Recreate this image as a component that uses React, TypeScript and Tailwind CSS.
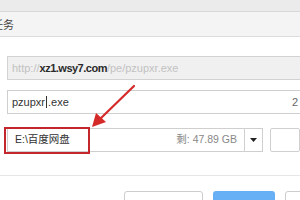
import React from "react";

export default function App() {
  return (
    <div
      className="relative w-[300px] h-[200px] overflow-hidden bg-white"
      style={{ fontFamily: '"Liberation Sans", "Noto Sans CJK SC", sans-serif' }}
    >
      <div className="h-[12px] bg-[#ebebeb] border-b border-[#d9d9d9]" />
      <div className="h-[25px] bg-[#f4f4f4] border-b border-[#dcdcdc] flex items-center">
        <span className="ml-[-8px] mt-[2px] text-[11px] text-[#444]">任务</span>
      </div>

      <div className="mt-[19px] ml-[7px] w-[310px] h-[24px] bg-[#f0f0f0] border border-[#d2d2d2] flex items-center pl-[4px] text-[11px] text-[#c2c2c2] whitespace-nowrap">
        <span>http://</span>
        <span className="text-[#2a2a2a] font-bold tracking-[-0.5px]">xz1.wsy7.com</span>
        <span>/pe/pzupxr.exe</span>
      </div>

      <div className="mt-[10px] ml-[7px] w-[296px] h-[24px] bg-white border border-[#cfcfcf] flex items-center justify-between pl-[4px] pr-[4px] text-[11px] text-[#333] whitespace-nowrap">
        <span className="flex items-center">
          pzupxr
          <span className="inline-block w-[1px] h-[12px] bg-[#333] mx-[1px]" />
          .exe
        </span>
        <span className="text-[#666]">2</span>
      </div>

      <div className="mt-[14px] ml-[7px] flex items-center h-[24px]">
        <div className="w-[272px] h-[24px] border border-[#cfcfcf] flex">
          <div className="flex-1 flex items-center justify-between pl-[7px] pr-[7px] text-[10.5px] whitespace-nowrap">
            <span className="text-[#333]">E:\百度网盘</span>
            <span className="text-[#888]">剩: 47.89 GB</span>
          </div>
          <div className="w-[18px] border-l border-[#cfcfcf] flex items-center justify-center">
            <svg width="7" height="4" viewBox="0 0 7 4">
              <path d="M0 0 L7 0 L3.5 4 Z" fill="#222" />
            </svg>
          </div>
        </div>
        <div className="ml-[7px] w-[30px] h-[24px] border border-[#d0d0d0] rounded-[2px] bg-white shrink-0" />
      </div>

      <div className="mt-[23px] border-t border-[#e6e6e6]" />

      <div className="mt-[15px] flex">
        <div className="ml-[124px] w-[79px] h-[30px] border border-[#cdcdcd] rounded-[3px] bg-white shrink-0" />
        <div className="ml-[10px] w-[62px] h-[30px] rounded-[3px] bg-[#68b0f6] shrink-0" />
        <div className="ml-[10px] w-[30px] h-[30px] border border-[#cdcdcd] rounded-[3px] bg-white shrink-0" />
      </div>

      <div className="absolute left-[4px] top-[127px] w-[86px] h-[27px] border-2 border-[#c4262e]" />

      <svg className="absolute left-0 top-0" width="300" height="200" viewBox="0 0 300 200">
        <line x1="134" y1="86" x2="100" y2="119" stroke="#d42a2a" strokeWidth="2.2" strokeLinecap="round" />
        <path d="M92 127 L96 113 L106 122 Z" fill="#d42a2a" />
      </svg>
    </div>
  );
}
